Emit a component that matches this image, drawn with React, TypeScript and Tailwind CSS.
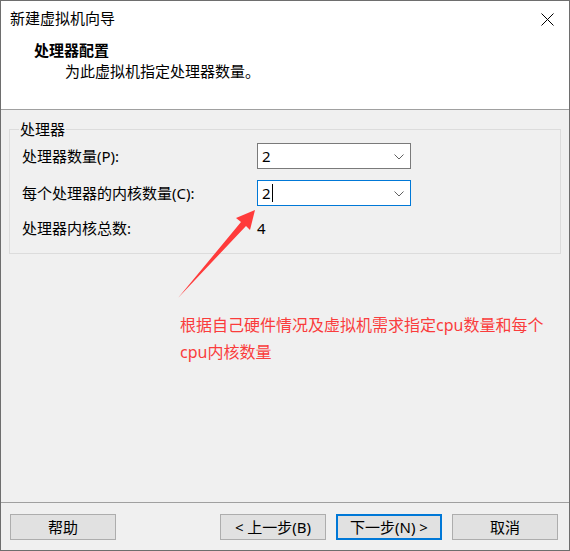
const FONT = {
  fontFamily: '"Segoe UI", "Noto Sans", "Noto Sans CJK SC", sans-serif',
};

function Chevron() {
  return (
    <svg width="10" height="6" viewBox="0 0 10 6" className="mt-[1px] shrink-0">
      <path d="M0.5 0.5 L5 5 L9.5 0.5" fill="none" stroke="#606060" strokeWidth="1" />
    </svg>
  );
}

function Combo({ value, focused }: { value: string; focused?: boolean }) {
  return (
    <div
      className={`flex h-[26px] w-[154px] items-center justify-between bg-white pl-[4px] pr-[6px] ${
        focused ? "border border-[#0078d7]" : "border border-[#7a7a7a]"
      }`}
    >
      <span className="flex items-center text-[15px] leading-[20px] text-black">
        {value}
        {focused && <span className="ml-[1px] inline-block h-[18px] w-px bg-black" />}
      </span>
      <Chevron />
    </div>
  );
}

function Button({ label, primary }: { label: string; primary?: boolean }) {
  return (
    <button
      className={`flex h-[26px] w-[106px] items-center justify-center bg-[#e1e1e1] text-[15px] leading-[20px] text-black ${
        primary ? "border-2 border-[#0078d7]" : "border border-[#adadad]"
      }`}
    >
      {label}
    </button>
  );
}

function Arrow() {
  return (
    <svg
      className="pointer-events-none absolute left-0 top-0"
      width="570"
      height="551"
      viewBox="0 0 570 551"
    >
      <polygon
        points="254,209 235,217 240,221 177,297 245,225 249,229"
        fill="#ff3b3b"
      />
    </svg>
  );
}

export default function App() {
  return (
    <div
      className="relative flex h-[551px] w-[570px] flex-col border border-[#6e6e6e] bg-[#f0f0f0]"
      style={FONT}
    >
      {/* header */}
      <div className="h-[109px] shrink-0 border-b border-[#a0a0a0] bg-white">
        <div className="flex h-[34px] items-start justify-between pl-[9px] pr-[15px] pt-[7px]">
          <span className="text-[15px] leading-[20px] text-black">新建虚拟机向导</span>
          <svg width="13" height="13" viewBox="0 0 13 13" className="mt-[5px]">
            <path d="M0.5 0.5 L12.5 12.5 M12.5 0.5 L0.5 12.5" stroke="#000" strokeWidth="1" />
          </svg>
        </div>
        <div className="pl-[33px] pt-[5px] text-[15px] font-bold leading-[20px] text-black">
          处理器配置
        </div>
        <div className="pl-[64px] pt-[1px] text-[15px] leading-[20px] text-black">
          为此虚拟机指定处理器数量。
        </div>
      </div>

      {/* body */}
      <div className="flex-1 px-[8px] pt-[19px]">
        <div className="relative h-[125px] border border-[#dcdcdc] pl-[12px] pt-[13px]">
          <span className="absolute -top-[11px] left-[9px] bg-[#f0f0f0] px-[1px] text-[15px] leading-[20px] text-black">
            处理器
          </span>
          <div className="flex h-[26px] items-center">
            <span className="w-[235px] text-[15px] leading-[20px] text-black">处理器数量(P):</span>
            <Combo value="2" />
          </div>
          <div className="mt-[11px] flex h-[26px] items-center">
            <span className="w-[235px] text-[15px] leading-[20px] text-black">
              每个处理器的内核数量(C):
            </span>
            <Combo value="2" focused />
          </div>
          <div className="mt-[12px] flex h-[20px] items-center">
            <span className="w-[235px] text-[15px] leading-[20px] text-black">处理器内核总数:</span>
            <span className="text-[15px] leading-[20px] text-black">4</span>
          </div>
        </div>

        <div className="ml-[171px] mt-[58px] text-[16px] leading-[27px] text-[#fa3c3c]">
          根据自己硬件情况及虚拟机需求指定cpu数量和每个
          <br />
          cpu内核数量
        </div>
      </div>

      {/* footer */}
      <div className="flex h-[48px] shrink-0 items-start border-t border-[#a0a0a0] pl-[9px] pt-[11px]">
        <Button label="帮助" />
        <div className="ml-[104px] flex gap-[10px]">
          <Button label="< 上一步(B)" />
          <Button label="下一步(N) >" primary />
          <Button label="取消" />
        </div>
      </div>

      <Arrow />
    </div>
  );
}
